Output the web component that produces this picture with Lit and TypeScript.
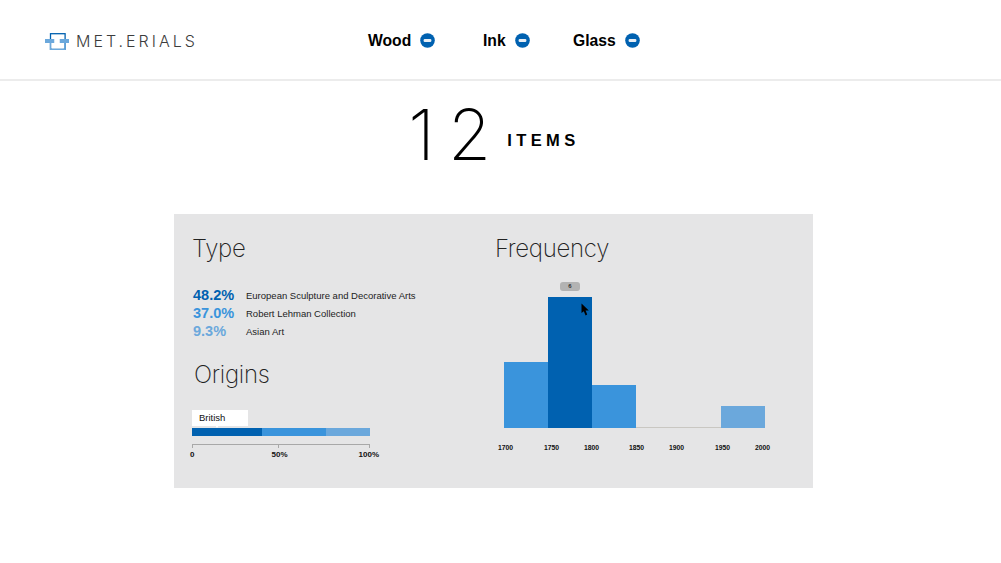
import { LitElement, html, css } from "lit";
import { customElement } from "lit/decorators.js";

const minus = html`<svg class="minus" width="15" height="15" viewBox="0 0 15 15"><circle cx="7.5" cy="7.5" r="7.3" fill="#0061b0"/><rect x="3.6" y="6" width="7.8" height="3" rx="1.2" fill="#e8eef5"/></svg>`;

@customElement("app-root")
export class AppRoot extends LitElement {
  static styles = css`
    :host { display: block; width: 1001px; height: 563px; background: #fff; overflow: hidden; font-family: "Liberation Sans", Arial, sans-serif; color: #000; }
    header { height: 79px; border-bottom: 2px solid #ececec; display: flex; align-items: center; box-sizing: content-box; }
    .logo { display: flex; align-items: center; margin-left: 45px; width: 323px; gap: 7px; padding-top: 3px; }
    .brand { font-family: Inter, sans-serif; font-weight: 300; font-size: 16px; letter-spacing: 3px; color: #3c3c3c; }
    .tags { display: flex; padding-top: 2px; }
    .tag { display: flex; align-items: center; gap: 9px; font-size: 15.7px; font-weight: 700; line-height: 17px; }
    .tag.wood { width: 115px; }
    .tag.ink { width: 90px; }
    .count { display: flex; justify-content: center; align-items: center; height: 108px; margin-bottom: 25px; padding-right: 13px; }
    .num { font-family: Inter, sans-serif; font-weight: 200; font-size: 70px; letter-spacing: 13px; line-height: 108px; margin-right: 3px; }
    .items { font-size: 16.5px; font-weight: 700; letter-spacing: 4.4px; margin-top: 10px; }
    .panel { margin-left: 174px; width: 639px; height: 274px; background: #e5e5e6; display: flex; }
    .left { width: 321px; padding: 20px 0 0 18px; box-sizing: border-box; }
    .right { padding: 20px 0 0 0; flex: 1; }
    h2 { margin: 0; font-family: Inter, sans-serif; font-weight: 200; font-size: 24px; line-height: 30px; color: #222; letter-spacing: -0.3px; }
    .rows { margin: 23px 0 0 1px; display: grid; grid-template-columns: 53px 1fr; align-items: center; }
    .pct { font-size: 14.5px; font-weight: 700; line-height: 17.8px; }
    .pct.a { color: #0061b0; }
    .pct.b { color: #3a94dc; }
    .pct.c { color: #6ba8dc; }
    .lab { font-size: 9.5px; color: #222; }
    .origins { margin: 20px 0 0 2px; }
    .tip { margin-top: 20px; width: 56px; height: 16px; background: #fff; box-sizing: border-box; font-size: 9.5px; line-height: 16px; padding-left: 7px; color: #111; position: relative; }
    .tip::after { content: ""; position: absolute; left: 23px; top: 15px; border: 2px solid transparent; border-top: 3px solid #fff; }
    .stack { display: flex; width: 178px; height: 8px; margin-top: 2px; }
    .stack div { height: 100%; }
    .axis { width: 178px; height: 4px; margin-top: 8px; border: 1px solid #a8a8a8; border-bottom: 0; box-sizing: border-box; position: relative; }
    .axis::after { content: ""; position: absolute; left: 85px; top: 0; width: 1px; height: 3px; background: #a8a8a8; }
    .axis-labels { display: flex; justify-content: space-between; width: 189px; margin-left: -2px; font-size: 8px; font-weight: 700; margin-top: 2px; line-height: 9px; color: #111; }
    .axis-labels .mid { margin-left: 6px; }
    .chart { margin: 20px 0 0 9px; width: 261px; height: 144px; display: flex; align-items: flex-end; position: relative; }
    .bar { width: 44px; }
    .gap { width: 85px; height: 1px; background: #c9c7c2; }
    .bubble { position: absolute; left: 56px; top: -2px; width: 20px; height: 9px; border-radius: 3px; background: #b3b3b3; font-size: 6px; line-height: 9px; text-align: center; color: #333; font-weight: 700; }
    .cursor { position: absolute; left: 76.5px; top: 19px; }
    .years { display: flex; margin: 15px 0 0 3px; font-size: 6.8px; font-weight: 700; line-height: 9px; color: #111; }
    .years span { display: block; }
  `;

  render() {
    return html`
      <header>
        <div class="logo">
          <svg width="24" height="17" viewBox="0 0 24 17">
            <rect x="5.5" y="0.7" width="14.6" height="15.6" fill="none" stroke="#0061b0" stroke-width="1.3"/>
            <rect x="7" y="9.4" width="11.5" height="6" fill="#fff"/>
            <rect x="0" y="6" width="9.5" height="4" fill="#6ba8dc"/>
            <rect x="14.5" y="6" width="9.5" height="4" fill="#6ba8dc"/>
            <rect x="9.5" y="5" width="5" height="6" fill="#fff"/>
            <path d="M5.5 10v6.3h14.6V10" fill="none" stroke="#6ba8dc" stroke-width="1.3"/>
          </svg>
          <span class="brand">MET.ERIALS</span>
        </div>
        <div class="tags">
          <div class="tag wood">Wood ${minus}</div>
          <div class="tag ink">Ink ${minus}</div>
          <div class="tag glass">Glass ${minus}</div>
        </div>
      </header>
      <div class="count"><span class="num">12</span><span class="items">ITEMS</span></div>
      <section class="panel">
        <div class="left">
          <h2>Type</h2>
          <div class="rows">
            <span class="pct a">48.2%</span><span class="lab">European Sculpture and Decorative Arts</span>
            <span class="pct b">37.0%</span><span class="lab">Robert Lehman Collection</span>
            <span class="pct c">9.3%</span><span class="lab">Asian Art</span>
          </div>
          <div class="origins"><h2>Origins</h2></div>
          <div class="tip">British</div>
          <div class="stack">
            <div style="width:70px;background:#0061b0"></div>
            <div style="width:64px;background:#3a94dc"></div>
            <div style="width:44px;background:#6ba8dc"></div>
          </div>
          <div class="axis"></div>
          <div class="axis-labels"><span>0</span><span class="mid">50%</span><span>100%</span></div>
        </div>
        <div class="right">
          <h2>Frequency</h2>
          <div class="chart">
            <div class="bar" style="height:66px;background:#3a94dc"></div>
            <div class="bar" style="height:131px;background:#0061b0"></div>
            <div class="bar" style="height:43px;background:#3a94dc"></div>
            <div class="gap"></div>
            <div class="bar" style="height:22px;background:#6ba8dc"></div>
            <div class="bubble">6</div>
            <svg class="cursor" width="9" height="13" viewBox="0 0 9 13"><path d="M0.5 0.5V10L2.8 8.2 4.6 12.4 6.2 11.6 4.6 7.6H7.8Z" fill="#000"/></svg>
          </div>
          <div class="years">
            <span style="width:46px">1700</span><span style="width:40px">1750</span><span style="width:45px">1800</span><span style="width:40px">1850</span><span style="width:46px">1900</span><span style="width:40px">1950</span><span>2000</span>
          </div>
        </div>
      </section>
    `;
  }
}
